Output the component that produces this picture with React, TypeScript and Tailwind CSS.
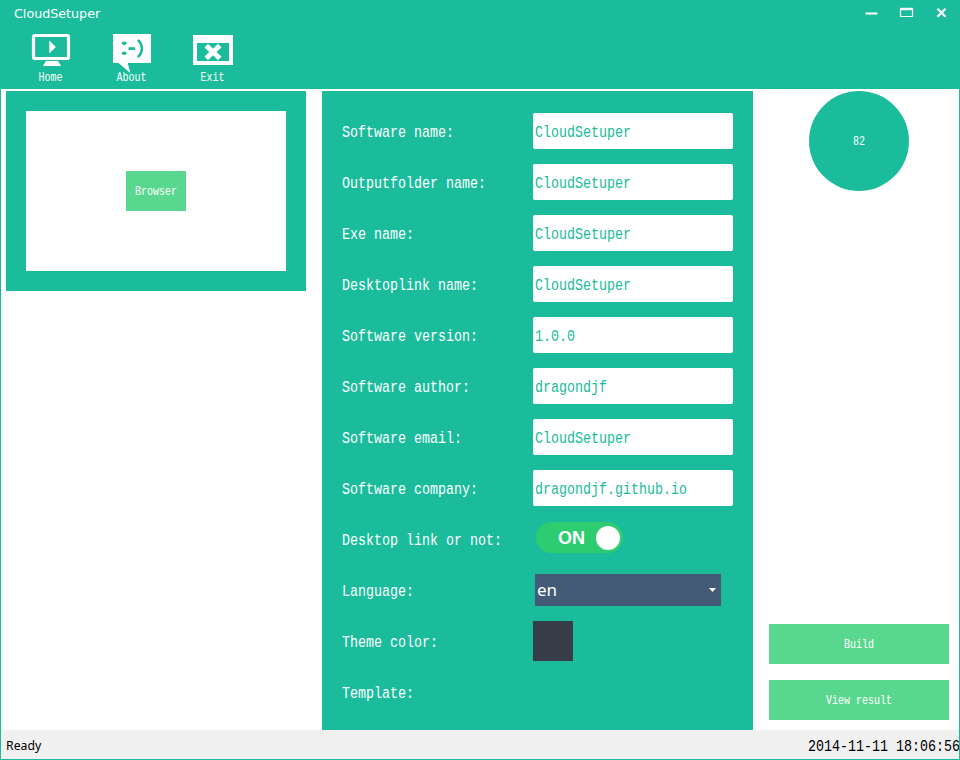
import type { ReactNode } from "react";

const MONO = "font-['Liberation_Mono',monospace] whitespace-pre";

function Mono({ children, small = false, className = "" }: { children: ReactNode; small?: boolean; className?: string }) {
  return (
    <span
      className={`${MONO} inline-block ${small ? "text-[10px] leading-3 scale-y-[1.2] pt-0.5" : "text-[13.33px] leading-4 scale-y-[1.22]"} ${className}`}
    >
      {children}
    </span>
  );
}

function HomeIcon() {
  return (
    <svg width="40" height="40" viewBox="0 0 40 40" fill="none">
      <rect x="2.5" y="3.5" width="35" height="23" rx="1.5" stroke="white" strokeWidth="3.2" />
      <path d="M18.3 8.5V21.5L24.8 15Z" fill="white" />
      <path d="M15 29H27L30 34H12Z" fill="white" />
    </svg>
  );
}

function AboutIcon() {
  return (
    <svg width="40" height="42" viewBox="0 0 40 42" fill="none" className="-mb-0.5">
      <path d="M1 2H39V31H15.7L18.3 41L6.5 31H1Z" fill="white" />
      <ellipse cx="12.2" cy="11.3" rx="2.6" ry="1.8" fill="#1abc9c" />
      <ellipse cx="12.2" cy="21.3" rx="2.6" ry="1.8" fill="#1abc9c" />
      <path d="M16.5 16.6H23" stroke="#1abc9c" strokeWidth="2.8" />
      <path d="M25.8 8C31.2 12.5 31.2 20.5 25.8 25" stroke="#1abc9c" strokeWidth="2.6" />
    </svg>
  );
}

function ExitIcon() {
  return (
    <svg width="40" height="40" viewBox="0 0 40 40" fill="none">
      <path d="M0 3H40V33H0ZM4 11V29H36V11Z" fill="white" fillRule="evenodd" />
      <path d="M15 15.3L25 24.7M25 15.3L15 24.7" stroke="white" strokeWidth="5" strokeLinecap="square" />
    </svg>
  );
}

const tools = [
  { label: "Home", icon: <HomeIcon /> },
  { label: "About", icon: <AboutIcon /> },
  { label: "Exit", icon: <ExitIcon /> },
];

const fields = [
  ["Software name:", "CloudSetuper"],
  ["Outputfolder name:", "CloudSetuper"],
  ["Exe name:", "CloudSetuper"],
  ["Desktoplink name:", "CloudSetuper"],
  ["Software version:", "1.0.0"],
  ["Software author:", "dragondjf"],
  ["Software email:", "CloudSetuper"],
  ["Software company:", "dragondjf.github.io"],
];

function Row({ label, children }: { label: string; children?: ReactNode }) {
  return (
    <div className="flex h-[51px] items-center">
      <div className="flex w-[191px] shrink-0 pt-1 text-white">
        <Mono>{label}</Mono>
      </div>
      {children}
    </div>
  );
}

export default function App() {
  return (
    <div className="flex h-[760px] w-[960px] flex-col overflow-hidden border-x border-b border-[#1abc9c] bg-white">
      <header className="h-[89px] shrink-0 bg-[#1abc9c] text-white">
        <div className="flex h-8 items-start justify-between pl-[13px]">
          <span className="pt-1.5 font-['DejaVu_Sans',sans-serif] text-[12.7px] leading-4">CloudSetuper</span>
          <svg width="94" height="26" viewBox="0 0 94 26" fill="none" stroke="white">
            <path d="M0.5 13.5H12.5" strokeWidth="2" />
            <path d="M35.5 8.5V16.5H47.5V8.5" strokeWidth="1.2" />
            <path d="M35 9H48" strokeWidth="2.4" />
            <path d="M72.5 8.7L80.5 16.7M80.5 8.7L72.5 16.7" strokeWidth="2.2" />
          </svg>
        </div>
        <div className="flex pl-[9px]">
          {tools.map((t) => (
            <div key={t.label} className="flex w-[81px] flex-col items-center">
              {t.icon}
              <Mono small className="-mt-0.5">{t.label}</Mono>
            </div>
          ))}
        </div>
      </header>

      <main className="flex min-h-0 flex-1 pt-0.5 pl-[5px]">
        <section className="flex h-[200px] w-[300px] shrink-0 bg-[#1abc9c] p-5">
          <div className="flex flex-1 items-center justify-center bg-white">
            <button className="flex h-10 w-[60px] items-center justify-center bg-[#5ad78f] text-white">
              <Mono small>Browser</Mono>
            </button>
          </div>
        </section>

        <section className="ml-4 w-[431px] shrink-0 bg-[#1abc9c] pt-3.5 pl-5">
          {fields.map(([label, value]) => (
            <Row key={label} label={label}>
              <div className="flex h-9 w-[200px] items-center rounded-[2px] bg-white pt-1 pl-0.5 text-[#1abc9c]">
                <Mono>{value}</Mono>
              </div>
            </Row>
          ))}
          <Row label="Desktop link or not:">
            <div className="mb-0.5 ml-[3px] flex h-[31px] w-[87px] items-center justify-between rounded-full bg-[#2ecc71] pr-[3px] pl-[22px]">
              <span className="font-['Liberation_Sans',sans-serif] text-[18px] font-bold leading-6 text-white">ON</span>
              <span className="h-6 w-6 rounded-full bg-white" />
            </div>
          </Row>
          <Row label="Language:">
            <div className="ml-0.5 flex h-8 w-[186px] items-center justify-between bg-[#435b76] pr-[5px] pl-0.5 text-white">
              <span className="font-['Noto_Sans',sans-serif] text-[17px] leading-6">en</span>
              <svg width="7" height="4" viewBox="0 0 7 4">
                <path d="M0 0H7L3.5 4Z" fill="white" />
              </svg>
            </div>
          </Row>
          <Row label="Theme color:">
            <div className="h-10 w-10 bg-[#363c48]" />
          </Row>
          <Row label="Template:" />
        </section>

        <aside className="ml-4 flex w-[180px] flex-col items-center pb-2.5 text-white">
          <div className="flex h-[100px] w-[100px] items-center justify-center rounded-full bg-[#1abc9c]">
            <Mono small>82</Mono>
          </div>
          <button className="mt-auto flex h-10 w-full items-center justify-center bg-[#5ad78f]">
            <Mono small>Build</Mono>
          </button>
          <button className="mt-4 flex h-10 w-full items-center justify-center bg-[#5ad78f]">
            <Mono small>View result</Mono>
          </button>
        </aside>
      </main>

      <footer className="flex h-[29px] shrink-0 items-center justify-between bg-[#f0f0f0] pl-[5px] text-black">
        <span className="pt-[3px] font-['Noto_Sans',sans-serif] text-[12.3px] leading-4">Ready</span>
        <Mono className="-mr-px mt-[5px]">2014-11-11 18:06:56</Mono>
      </footer>
    </div>
  );
}
